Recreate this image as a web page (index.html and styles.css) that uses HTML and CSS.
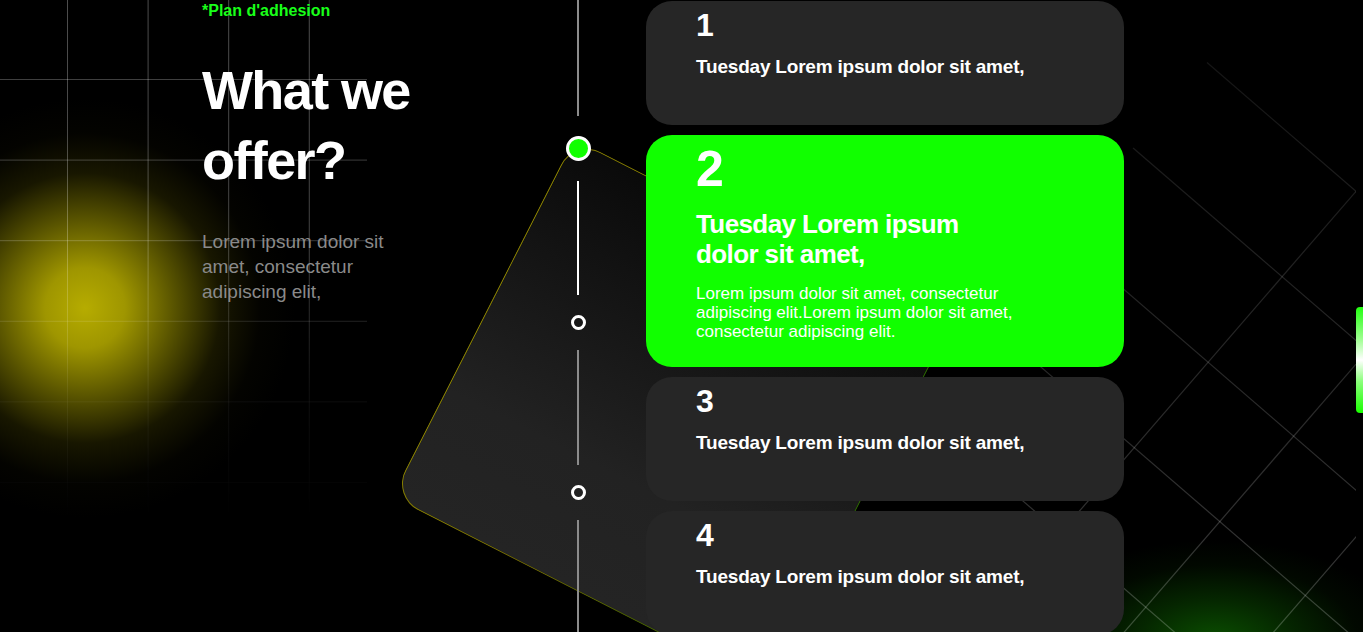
FILE: index.html
```html
<!DOCTYPE html>
<html lang="fr">
<head>
<meta charset="utf-8">
<title>What we offer?</title>
<link rel="stylesheet" href="styles.css">
</head>
<body>
<div class="page">
  <div class="glow-yellow"></div>
  <div class="grid-left"></div>
  <div class="glow-green"></div>
  <svg class="grid-right" width="1363" height="632" viewBox="0 0 1363 632" aria-hidden="true">
    <defs>
      <clipPath id="clipR"><rect x="0" y="0" width="1356" height="632"/></clipPath>
      <linearGradient id="fadeR" gradientUnits="userSpaceOnUse" x1="0" y1="50" x2="0" y2="632">
        <stop offset="0" stop-color="#fff" stop-opacity="0.08"/>
        <stop offset="1" stop-color="#fff" stop-opacity="0.22"/>
      </linearGradient>
    </defs>
    <g clip-path="url(#clipR)" stroke="url(#fadeR)" stroke-width="1.2" fill="none">
      <line x1="1207" y1="62.5" x2="1356" y2="191.3"/>
      <line x1="1133.1" y1="148" x2="1587" y2="540"/>
      <line x1="1059.3" y1="233.5" x2="1513" y2="626"/>
      <line x1="985.4" y1="319" x2="1439" y2="711"/>
      <line x1="911.5" y1="404.5" x2="1365" y2="797"/>
      <line x1="1356" y1="191.3" x2="833" y2="796"/>
      <line x1="1441.5" y1="265.2" x2="918.5" y2="870"/>
      <line x1="1527" y1="339" x2="1004" y2="944"/>
      <line x1="1612.5" y1="412.9" x2="1089.5" y2="1018"/>
    </g>
  </svg>
  <div class="tilted"></div>

  <main class="layout">
    <section class="intro">
      <p class="label">*Plan d'adhesion</p>
      <h1 class="heading">What we offer?</h1>
      <p class="lead">Lorem ipsum dolor sit amet, consectetur adipiscing elit,</p>
    </section>

    <div class="timeline">
      <span class="seg seg-top"></span>
      <span class="dot-active"></span>
      <span class="seg seg-active"></span>
      <span class="ring"></span>
      <span class="seg"></span>
      <span class="ring"></span>
      <span class="seg seg-last"></span>
    </div>

    <div class="cards">
      <article class="card">
        <div class="num">1</div>
        <h2 class="card-title">Tuesday Lorem ipsum dolor sit amet,</h2>
      </article>
      <article class="card card-active">
        <div class="num">2</div>
        <h2 class="card-title">Tuesday Lorem ipsum dolor sit amet,</h2>
        <p class="card-text">Lorem ipsum dolor sit amet, consectetur adipiscing elit.Lorem ipsum dolor sit amet, consectetur adipiscing elit.</p>
      </article>
      <article class="card">
        <div class="num">3</div>
        <h2 class="card-title">Tuesday Lorem ipsum dolor sit amet,</h2>
      </article>
      <article class="card">
        <div class="num">4</div>
        <h2 class="card-title">Tuesday Lorem ipsum dolor sit amet,</h2>
      </article>
    </div>
  </main>

  <div class="scroll-thumb"></div>
</div>
</body>
</html>
```

FILE: styles.css
```css
* { box-sizing: border-box; }

html, body {
  margin: 0;
  padding: 0;
  background: #000;
  overflow: hidden;
}

body {
  font-family: "Liberation Sans", Arial, sans-serif;
  color: #fff;
}

.page {
  position: relative;
  width: 1363px;
  height: 632px;
  overflow: hidden;
  background: #000;
}

/* ---------- decorative background ---------- */
.glow-yellow {
  position: absolute;
  left: 0;
  top: 0;
  width: 460px;
  height: 632px;
  background: radial-gradient(circle at 85px 308px,
    rgba(182, 172, 0, 1) 0px,
    rgba(176, 166, 0, 0.9) 40px,
    rgba(150, 142, 0, 0.58) 90px,
    rgba(100, 95, 0, 0.24) 135px,
    rgba(60, 56, 0, 0.06) 175px,
    rgba(0, 0, 0, 0) 210px);
}

.grid-left {
  position: absolute;
  left: 0;
  top: 0;
  width: 367px;
  height: 545px;
  background-image:
    linear-gradient(to right, rgba(255, 255, 255, 0.3) 1px, transparent 1px),
    linear-gradient(to bottom, rgba(255, 255, 255, 0.26) 1px, transparent 1px);
  background-size: 80.6px 80.6px;
  background-position: 67px 79px;
  -webkit-mask-image: linear-gradient(to bottom, #000 0%, rgba(0,0,0,0.85) 45%, rgba(0,0,0,0.2) 72%, transparent 95%);
  mask-image: linear-gradient(to bottom, #000 0%, rgba(0,0,0,0.85) 45%, rgba(0,0,0,0.2) 72%, transparent 95%);
}

.glow-green {
  position: absolute;
  left: 980px;
  top: 440px;
  width: 383px;
  height: 192px;
  background: radial-gradient(ellipse 190px 100px at 235px 200px,
    rgba(10, 78, 0, 1) 0%,
    rgba(7, 55, 0, 0.7) 40%,
    rgba(4, 28, 0, 0.3) 75%,
    rgba(0, 0, 0, 0) 100%);
}

.grid-right {
  position: absolute;
  left: 0;
  top: 0;
  pointer-events: none;
}

.tilted {
  position: absolute;
  left: 460px;
  top: 212px;
  width: 420px;
  height: 402px;
  border-radius: 30px;
  border: 1px solid transparent;
  transform: rotate(27deg);
  background:
    linear-gradient(to bottom, #0a0a0a 0%, #161616 35%, #222 70%, #242424 100%) padding-box,
    linear-gradient(to right, #857d00 0%, #6a6300 35%, #3f5a00 70%, #2a6400 100%) border-box;
}

/* ---------- layout ---------- */
.layout {
  position: relative;
  z-index: 2;
  display: flex;
  align-items: flex-start;
  padding-left: 202px;
  height: 632px;
}

.intro {
  width: 225px;
  padding-top: 2px;
}

.label {
  margin: 0;
  font-size: 16px;
  line-height: 18px;
  font-weight: 700;
  color: #19ff19;
}

.heading {
  margin: 35px 0 0;
  font-size: 54px;
  line-height: 70px;
  font-weight: 700;
  letter-spacing: -1.6px;
  color: #fff;
}

.lead {
  margin: 34px 0 0;
  font-size: 19px;
  line-height: 25px;
  color: #8a8a8a;
}

/* ---------- timeline ---------- */
.timeline {
  width: 24px;
  margin-left: 139px;
  height: 632px;
  display: flex;
  flex-direction: column;
  align-items: center;
  gap: 20px;
}

.seg {
  display: block;
  width: 2px;
  height: 115px;
  flex: none;
  background: #8c8c8c;
}

.seg-top { height: 116px; }
.seg-active { height: 114px; background: #fff; }
.seg-last { height: 120px; }

.dot-active {
  display: block;
  flex: none;
  width: 25px;
  height: 25px;
  border-radius: 50%;
  border: 3px solid #fff;
  background: #11ff00;
}

.ring {
  display: block;
  flex: none;
  width: 15px;
  height: 15px;
  border-radius: 50%;
  border: 3px solid #fff;
}

/* ---------- cards ---------- */
.cards {
  width: 478px;
  margin-left: 56px;
  padding-top: 1px;
  display: flex;
  flex-direction: column;
  gap: 10px;
}

.card {
  min-height: 124px;
  border-radius: 26px;
  background: #262626;
  padding: 5px 50px 20px;
}

.num {
  font-size: 32px;
  line-height: 38px;
  font-weight: 700;
}

.card-title {
  margin: 11px 0 0;
  font-size: 19px;
  line-height: 24px;
  font-weight: 700;
  letter-spacing: -0.2px;
}

.card-active {
  background: #11ff00;
  padding-bottom: 26px;
}

.card-active .num {
  font-size: 50px;
  line-height: 58px;
}

.card-active .card-title {
  max-width: 300px;
  font-size: 26px;
  line-height: 30px;
  letter-spacing: -0.6px;
}

.card-text {
  margin: 15px 0 0;
  font-size: 17px;
  line-height: 19px;
  max-width: 350px;
}

/* ---------- scroll thumb ---------- */
.scroll-thumb {
  position: absolute;
  right: 0;
  top: 307px;
  width: 7px;
  height: 106px;
  border-radius: 4px 0 0 4px;
  background: linear-gradient(to bottom, #22ff10 0%, #9dff8f 30%, #ffffff 50%, #8cff7c 70%, #1aff00 100%);
  z-index: 3;
}
```
